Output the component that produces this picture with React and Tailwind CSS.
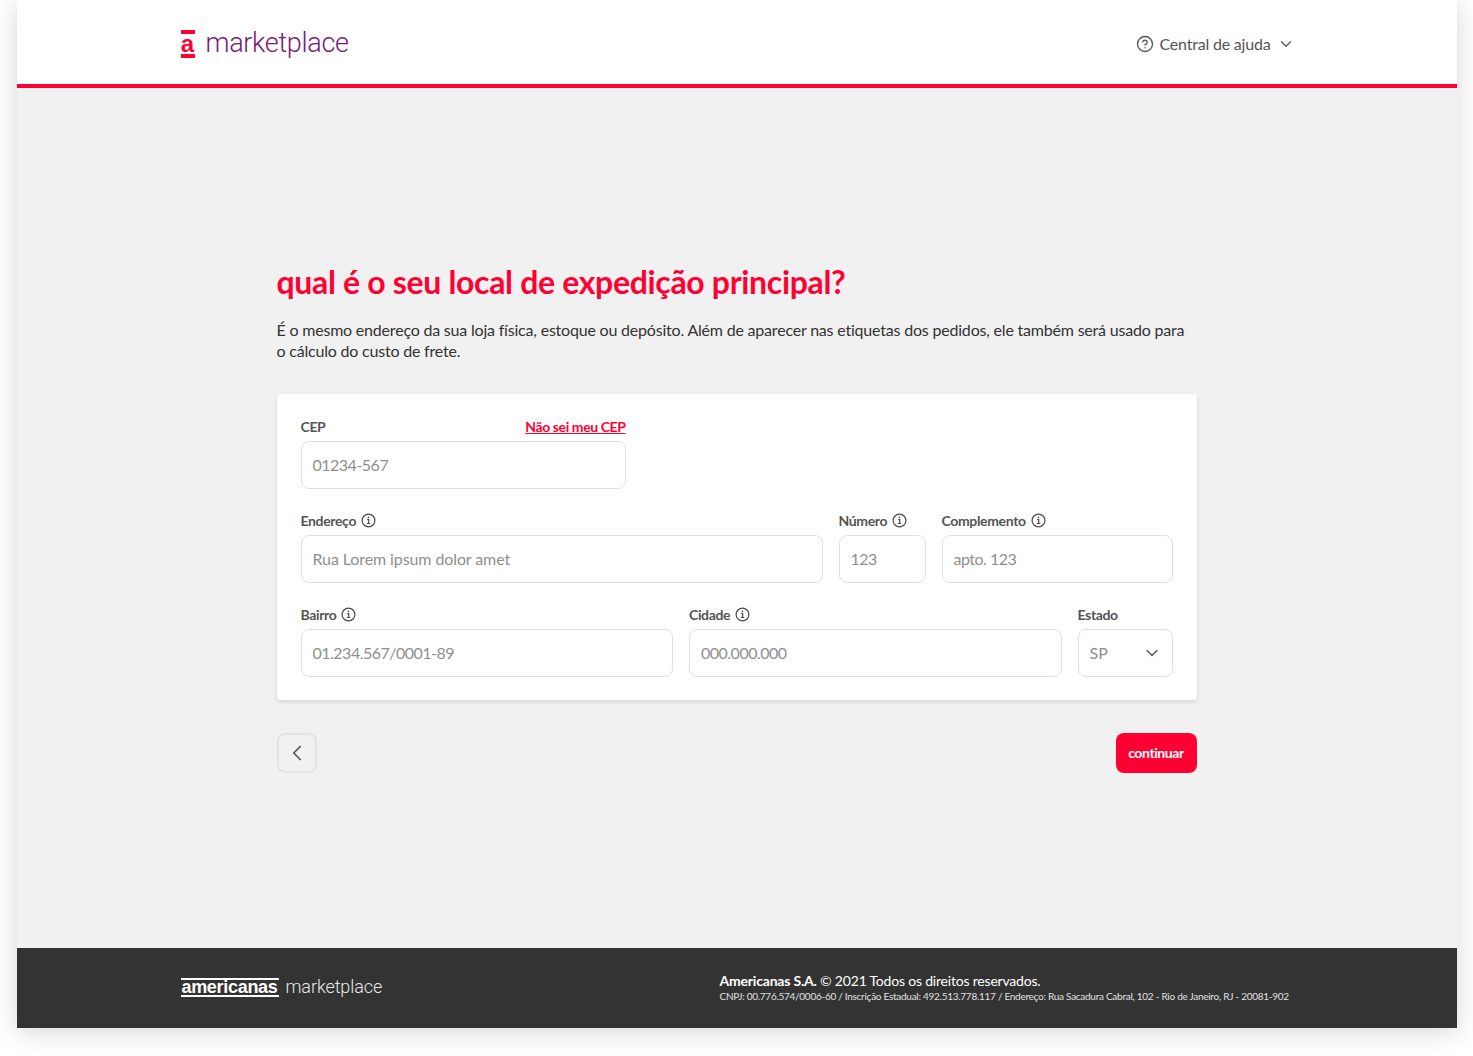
import React from 'react';
import { ChevronDown, ChevronLeft, CircleHelp } from 'lucide-react';

const InfoIcon = () => (
  <svg width="15" height="15" viewBox="0 0 15 15" fill="none" stroke="#4a4a4a" strokeWidth="1.2">
    <circle cx="7.5" cy="7.5" r="6.4" />
    <path d="M6.2 6.6h1.5v3.9M5.9 10.5h3.3" />
    <circle cx="7.4" cy="4.4" r="0.8" fill="#4a4a4a" stroke="none" />
  </svg>
);

const Field = ({ label, info, placeholder, className, action, digits }) => (
  <div className={className}>
    <div className="flex items-center justify-between h-[15px] mb-[7px]">
      <div className="flex items-center gap-[5px]">
        <span className="text-sm font-bold text-[#555] leading-none tracking-[-0.35px]">{label}</span>
        {info && <InfoIcon />}
      </div>
      {action}
    </div>
    <div className={`h-[47.5px] rounded-lg border border-[#e0e0e0] bg-white px-[11px] flex items-center text-base text-[#8f8f8f] ${digits ? 'tracking-[-0.5px]' : 'tracking-[-0.1px]'}`}>
      {placeholder}
    </div>
  </div>
);

const Brand = ({ className }) => (
  <span className={`font-['Roboto',sans-serif] font-light ${className}`}>marketplace</span>
);

const App = () => {
  return (
    <div className="bg-white h-[1056px] overflow-hidden pl-[16.5px] pr-4 font-['Lato',sans-serif]">
      <div className="w-[1440px] h-[1028px] flex flex-col shadow-[0_4px_24px_rgba(0,0,0,0.16)]">
        <header className="h-[88px] shrink-0 bg-white border-b-4 border-[#ff0033] pl-[164px] pr-[164px] flex items-center justify-between">
          <div className="flex items-center gap-[11px] mt-[3px]">
            <div className="w-[14px] h-[28px] flex flex-col justify-between items-center">
              <div className="w-[14px] h-[4px] bg-[#ff0033]" />
              <span className="font-['Liberation_Sans',sans-serif] font-bold text-[24px] leading-[16px] text-[#ff0033]">a</span>
              <div className="w-[14px] h-[4px] bg-[#ff0033]" />
            </div>
            <Brand className="text-[27px] leading-none text-[#7a1a78] tracking-[-0.3px] -mt-[1px]" />
          </div>
          <div className="flex items-center text-base text-[#555] tracking-[-0.2px] mt-[4px] -mr-[2px]">
            <CircleHelp size={18} strokeWidth={1.8} className="mr-[6px]" />
            <span>Central de ajuda</span>
            <ChevronDown size={18} strokeWidth={1.6} className="ml-[6px]" />
          </div>
        </header>

        <main className="flex-1 bg-[#f1f1f1] flex justify-center pt-[174px]">
          <div className="w-[920px]">
            <h1 className="text-[32px] leading-[40px] font-bold text-[#ff0033] tracking-[-0.33px]">qual é o seu local de expedição principal?</h1>
            <p className="mt-[17px] text-base leading-[21px] text-[#333] tracking-[-0.2px]">
              É o mesmo endereço da sua loja física, estoque ou depósito. Além de aparecer nas etiquetas dos pedidos, ele também será usado para o cálculo do custo de frete.
            </p>
            <div className="mt-[33px] bg-white rounded-[4px] shadow-[0_2px_4px_rgba(0,0,0,0.12)] px-6 pt-[25px] pb-[23.5px] flex flex-col gap-[24.5px]">
              <Field
                className="w-[325px]"
                label="CEP"
                placeholder="01234-567"
                digits
                action={<a className="text-sm font-bold text-[#ff0033] underline leading-none tracking-[-0.4px]">Não sei meu CEP</a>}
              />
              <div className="flex gap-4">
                <Field className="w-[522px]" label="Endereço" info placeholder="Rua Lorem ipsum dolor amet" />
                <Field className="w-[87px]" label="Número" info placeholder="123" digits />
                <Field className="flex-1" label="Complemento" info placeholder="apto. 123" digits />
              </div>
              <div className="flex gap-4">
                <Field className="w-[372.5px]" label="Bairro" info placeholder="01.234.567/0001-89" digits />
                <Field className="w-[372.5px]" label="Cidade" info placeholder="000.000.000" digits />
                <div className="flex-1">
                  <div className="h-[15px] mb-[7px] flex items-center text-sm font-bold text-[#555] leading-none tracking-[-0.35px]">Estado</div>
                  <div className="h-[47.5px] rounded-lg border border-[#e0e0e0] bg-white pl-[11px] pr-[10px] flex items-center justify-between text-base text-[#8f8f8f]">
                    <span>SP</span>
                    <ChevronDown size={20} strokeWidth={1.6} className="text-[#555]" />
                  </div>
                </div>
              </div>
            </div>
            <div className="mt-[33px] flex items-center justify-between">
              <button className="w-[40px] h-[40px] rounded-lg border-2 border-[#e4e4e4] flex items-center justify-center text-[#555]">
                <ChevronLeft size={26} strokeWidth={1.6} />
              </button>
              <button className="h-[40px] w-[81px] rounded-lg bg-[#ff0033] text-white text-sm font-bold tracking-[-0.4px]">continuar</button>
            </div>
          </div>
        </main>

        <footer className="h-[80px] shrink-0 bg-[#333] pl-[164px] pr-[166px] flex items-center justify-between text-white">
          <div className="flex items-center gap-[7px] -mt-[2px]">
            <div className="w-[98px] h-[19px] flex flex-col justify-between">
              <div className="h-[2px] bg-white" />
              <span className="font-['Liberation_Sans',sans-serif] font-bold text-[18px] leading-[13px] tracking-[-0.3px] text-center whitespace-nowrap">americanas</span>
              <div className="h-[2px] bg-white" />
            </div>
            <Brand className="text-[18px] leading-none text-[#e8e8e8] tracking-[-0.1px]" />
          </div>
          <div className="w-[571px]">
            <div className="text-sm leading-[16px] tracking-[-0.2px]"><span className="font-bold">Americanas S.A.</span> © 2021 Todos os direitos reservados.</div>
            <div className="text-[10px] leading-[14px] text-[#e0e0e0] tracking-[-0.27px] whitespace-nowrap">CNPJ: 00.776.574/0006-60 / Inscrição Estadual: 492.513.778.117 / Endereço: Rua Sacadura Cabral, 102 - Rio de Janeiro, RJ - 20081-902</div>
          </div>
        </footer>
      </div>
    </div>
  );
};

export default App;
